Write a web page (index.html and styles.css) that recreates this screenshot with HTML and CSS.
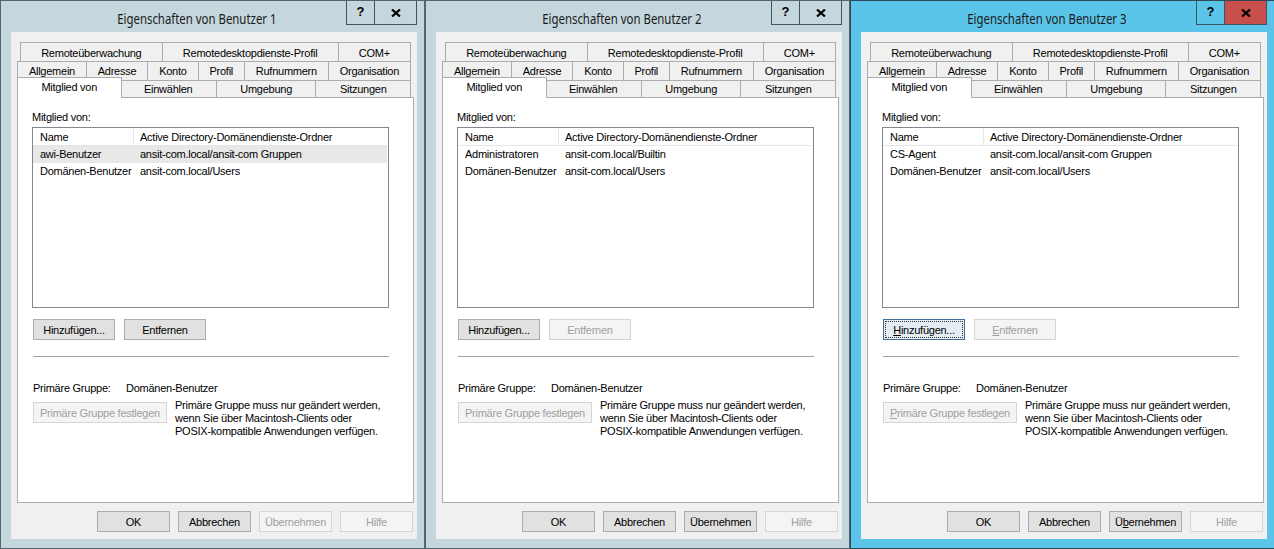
FILE: index.html
```html
<!DOCTYPE html>
<html lang="de">
<head>
<meta charset="utf-8">
<title>Eigenschaften von Benutzer</title>
<link rel="stylesheet" href="styles.css">
</head>
<body>
<div class="desk">

  <div class="win">
    <div class="caption">
      <div class="title"><span class="ttext">Eigenschaften von Benutzer 1</span></div>
      <div class="capbtns">
        <div class="capbtn help">?</div>
        <div class="capbtn close"><svg width="10" height="8" viewBox="0 0 10 8"><path d="M1 0.5 L9 7.5 M9 0.5 L1 7.5" stroke="#000" stroke-width="2.2" fill="none"/></svg></div>
      </div>
    </div>
    <div class="client">
      <div class="tabs">
        <div class="tabrow r1"><div class="tab">Remoteüberwachung</div><div class="tab">Remotedesktopdienste-Profil</div><div class="tab">COM+</div></div>
        <div class="tabrow r2"><div class="tab">Allgemein</div><div class="tab">Adresse</div><div class="tab">Konto</div><div class="tab">Profil</div><div class="tab">Rufnummern</div><div class="tab">Organisation</div></div>
        <div class="tabrow r3"><div class="tab sel">Mitglied von</div><div class="tab">Einwählen</div><div class="tab">Umgebung</div><div class="tab">Sitzungen</div></div>
        <div class="panel">
          <div class="label">Mitglied von:</div>
          <div class="list">
            <div class="lrow head"><div class="c1">Name</div><div class="c2">Active Directory-Domänendienste-Ordner</div></div>
            <div class="lrow hl"><div class="c1">awi-Benutzer</div><div class="c2">ansit-com.local/ansit-com Gruppen</div></div>
            <div class="lrow"><div class="c1">Domänen-Benutzer</div><div class="c2">ansit-com.local/Users</div></div>
          </div>
          <div class="btnrow">
            <div class="btn">Hinzufügen...</div>
            <div class="btn">Entfernen</div>
          </div>
          <div class="sep"></div>
          <div class="prim"><span class="pl">Primäre Gruppe:</span><span>Domänen-Benutzer</span></div>
          <div class="setrow">
            <div class="btn dis wide">Primäre Gruppe festlegen</div>
            <div class="note">Primäre Gruppe muss nur geändert werden,<br>wenn Sie über Macintosh-Clients oder<br>POSIX-kompatible Anwendungen verfügen.</div>
          </div>
        </div>
      </div>
      <div class="footer">
        <div class="btn fb">OK</div>
        <div class="btn fb">Abbrechen</div>
        <div class="btn fb dis">Übernehmen</div>
        <div class="btn fb dis">Hilfe</div>
      </div>
    </div>
  </div>

  <div class="win">
    <div class="caption">
      <div class="title"><span class="ttext">Eigenschaften von Benutzer 2</span></div>
      <div class="capbtns">
        <div class="capbtn help">?</div>
        <div class="capbtn close"><svg width="10" height="8" viewBox="0 0 10 8"><path d="M1 0.5 L9 7.5 M9 0.5 L1 7.5" stroke="#000" stroke-width="2.2" fill="none"/></svg></div>
      </div>
    </div>
    <div class="client">
      <div class="tabs">
        <div class="tabrow r1"><div class="tab">Remoteüberwachung</div><div class="tab">Remotedesktopdienste-Profil</div><div class="tab">COM+</div></div>
        <div class="tabrow r2"><div class="tab">Allgemein</div><div class="tab">Adresse</div><div class="tab">Konto</div><div class="tab">Profil</div><div class="tab">Rufnummern</div><div class="tab">Organisation</div></div>
        <div class="tabrow r3"><div class="tab sel">Mitglied von</div><div class="tab">Einwählen</div><div class="tab">Umgebung</div><div class="tab">Sitzungen</div></div>
        <div class="panel">
          <div class="label">Mitglied von:</div>
          <div class="list">
            <div class="lrow head"><div class="c1">Name</div><div class="c2">Active Directory-Domänendienste-Ordner</div></div>
            <div class="lrow"><div class="c1">Administratoren</div><div class="c2">ansit-com.local/Builtin</div></div>
            <div class="lrow"><div class="c1">Domänen-Benutzer</div><div class="c2">ansit-com.local/Users</div></div>
          </div>
          <div class="btnrow">
            <div class="btn">Hinzufügen...</div>
            <div class="btn dis">Entfernen</div>
          </div>
          <div class="sep"></div>
          <div class="prim"><span class="pl">Primäre Gruppe:</span><span>Domänen-Benutzer</span></div>
          <div class="setrow">
            <div class="btn dis wide">Primäre Gruppe festlegen</div>
            <div class="note">Primäre Gruppe muss nur geändert werden,<br>wenn Sie über Macintosh-Clients oder<br>POSIX-kompatible Anwendungen verfügen.</div>
          </div>
        </div>
      </div>
      <div class="footer">
        <div class="btn fb">OK</div>
        <div class="btn fb">Abbrechen</div>
        <div class="btn fb">Übernehmen</div>
        <div class="btn fb dis">Hilfe</div>
      </div>
    </div>
  </div>

  <div class="win active">
    <div class="caption">
      <div class="title"><span class="ttext">Eigenschaften von Benutzer 3</span></div>
      <div class="capbtns">
        <div class="capbtn help">?</div>
        <div class="capbtn close"><svg width="10" height="8" viewBox="0 0 10 8"><path d="M1 0.5 L9 7.5 M9 0.5 L1 7.5" stroke="#000" stroke-width="2.2" fill="none"/></svg></div>
      </div>
    </div>
    <div class="client">
      <div class="tabs">
        <div class="tabrow r1"><div class="tab">Remoteüberwachung</div><div class="tab">Remotedesktopdienste-Profil</div><div class="tab">COM+</div></div>
        <div class="tabrow r2"><div class="tab">Allgemein</div><div class="tab">Adresse</div><div class="tab">Konto</div><div class="tab">Profil</div><div class="tab">Rufnummern</div><div class="tab">Organisation</div></div>
        <div class="tabrow r3"><div class="tab sel">Mitglied von</div><div class="tab">Einwählen</div><div class="tab">Umgebung</div><div class="tab">Sitzungen</div></div>
        <div class="panel">
          <div class="label">Mitglied von:</div>
          <div class="list">
            <div class="lrow head"><div class="c1">Name</div><div class="c2">Active Directory-Domänendienste-Ordner</div></div>
            <div class="lrow"><div class="c1">CS-Agent</div><div class="c2">ansit-com.local/ansit-com Gruppen</div></div>
            <div class="lrow"><div class="c1">Domänen-Benutzer</div><div class="c2">ansit-com.local/Users</div></div>
          </div>
          <div class="btnrow">
            <div class="btn focus"><span class="focusring"><u>H</u>inzufügen...</span></div>
            <div class="btn dis"><u>E</u>ntfernen</div>
          </div>
          <div class="sep"></div>
          <div class="prim"><span class="pl">Primäre Gruppe:</span><span>Domänen-Benutzer</span></div>
          <div class="setrow">
            <div class="btn dis wide"><u>P</u>rimäre Gruppe festlegen</div>
            <div class="note">Primäre Gruppe muss nur geändert werden,<br>wenn Sie über Macintosh-Clients oder<br>POSIX-kompatible Anwendungen verfügen.</div>
          </div>
        </div>
      </div>
      <div class="footer">
        <div class="btn fb">OK</div>
        <div class="btn fb">Abbrechen</div>
        <div class="btn fb">Ü<u>b</u>ernehmen</div>
        <div class="btn fb dis">Hilfe</div>
      </div>
    </div>
  </div>

</div>
</body>
</html>
```

FILE: styles.css
```css
html, body {
  margin: 0;
  padding: 0;
}
body {
  width: 1274px;
  height: 549px;
  overflow: hidden;
  background: #c5d7dd;
  font-family: "Liberation Sans", Arial, sans-serif;
  font-size: 11px;
  letter-spacing: -0.25px;
  color: #000;
}
.desk {
  display: flex;
  width: 1280px;
}
.win {
  flex: none;
  width: 425px;
  height: 549px;
  box-sizing: border-box;
  border: 1px solid #51666f;
  background: #c5d7dd;
  display: flex;
  flex-direction: column;
}
.win.active {
  background: #5bc5e9;
  border-color: #2f4a57;
}
.caption {
  height: 31px;
  display: flex;
  align-items: flex-start;
  flex: none;
}
.title {
  flex: 1;
  text-align: center;
  padding-left: 46px;
  padding-top: 7px;
  font-family: "Noto Sans", "Open Sans", sans-serif;
  font-size: 15px;
  line-height: 20px;
  letter-spacing: 0;
  color: #1a1a1a;
}
.ttext {
  display: inline-block;
  transform: scaleX(0.76);
  white-space: nowrap;
}
.capbtns {
  display: flex;
  margin-right: 7px;
}
.capbtn {
  height: 24px;
  box-sizing: border-box;
  border: 1px solid #3d5561;
  border-top: none;
  display: flex;
  align-items: center;
  justify-content: center;
}
.capbtn.help {
  width: 29px;
  font-weight: bold;
  font-size: 13px;
  letter-spacing: 0;
  padding-bottom: 2px;
}
.capbtn.close {
  width: 43px;
  margin-left: -1px;
}
.active .capbtn.close {
  background: #c7504c;
}
.client {
  flex: 1;
  margin: 0 7px 9px 10px;
  background: #f0f0f0;
  padding: 10px 3px 0 6px;
  display: flex;
  flex-direction: column;
}
.tabs {
  display: flex;
  flex-direction: column;
}
.tabrow {
  display: flex;
  margin-right: 3px;
}
.tabrow.r1 { height: 19px; margin-left: 3px; }
.tabrow.r2 { height: 19px; }
.tabrow.r3 { height: 17px; margin-left: 2px; align-items: flex-start; }
.tab {
  flex: 1 1 auto;
  box-sizing: border-box;
  height: 19px;
  border: 1px solid #acacac;
  border-bottom: none;
  margin-left: -1px;
  background: #f0f0f0;
  text-align: center;
  line-height: 18px;
  white-space: nowrap;
}
.r1 .tab { line-height: 20px; }
.tabrow .tab:first-child { margin-left: 0; }
.r3 .tab { height: 17px; line-height: 17px; }
.r3 .tab.sel {
  position: relative;
  z-index: 1;
  height: 21px;
  margin: -3px -1px -1px -2px;
  background: #fff;
  line-height: 18px;
  padding-bottom: 2px;
}
.panel {
  height: 406px;
  box-sizing: border-box;
  border: 1px solid #acacac;
  background: #fff;
  padding: 13px 24px 0 14px;
}
.label {
  line-height: 13px;
}
.list {
  margin-top: 3px;
  height: 181px;
  box-sizing: border-box;
  border: 1px solid #828790;
  background: #fff;
}
.lrow {
  display: flex;
  height: 17px;
  line-height: 17px;
  white-space: nowrap;
}
.lrow.head {
  height: 18px;
  line-height: 19px;
  border-bottom: 1px solid #e5e5e5;
  box-sizing: border-box;
  margin-right: 1px;
}
.lrow.hl {
  background: #e8e8e8;
  margin-right: 1px;
}
.c1 {
  width: 101px;
  box-sizing: border-box;
  padding-left: 7px;
  flex: none;
}
.head .c1 { border-right: 1px solid #e5e5e5; }
.c2 {
  padding-left: 6px;
  flex: 1;
}
.btnrow {
  display: flex;
  gap: 9px;
  margin-top: 11px;
  margin-left: 1px;
}
.btn {
  width: 82px;
  height: 21px;
  box-sizing: border-box;
  border: 1px solid #adadad;
  background: #e1e1e1;
  display: flex;
  align-items: center;
  justify-content: center;
  white-space: nowrap;
}
.btn.dis {
  background: #f4f4f4;
  border-color: #d5d5d5;
  color: #a0a0a0;
}
.btn.focus {
  border-color: #3f6f9a;
  background: #e5ecf3;
}
.focusring {
  display: flex;
  align-items: center;
  justify-content: center;
  width: 76px;
  height: 15px;
  box-sizing: border-box;
  outline: 1px dotted #333;
}
.btn.wide {
  width: 134px;
}
.sep {
  margin-top: 16px;
  margin-left: 1px;
  border-top: 1px solid #a0a0a0;
}
.prim {
  margin-top: 25px;
  margin-left: 1px;
  line-height: 13px;
  display: flex;
}
.pl {
  width: 93px;
}
.setrow {
  margin-top: 7px;
  margin-left: 1px;
  display: flex;
  align-items: flex-start;
  gap: 8px;
}
.note {
  margin-top: -3px;
  line-height: 13px;
}
.footer {
  display: flex;
  justify-content: flex-end;
  gap: 8px;
  margin-top: 8px;
  padding-right: 1px;
}
.btn.fb {
  width: 73px;
}
u {
  text-decoration: underline;
}
```
